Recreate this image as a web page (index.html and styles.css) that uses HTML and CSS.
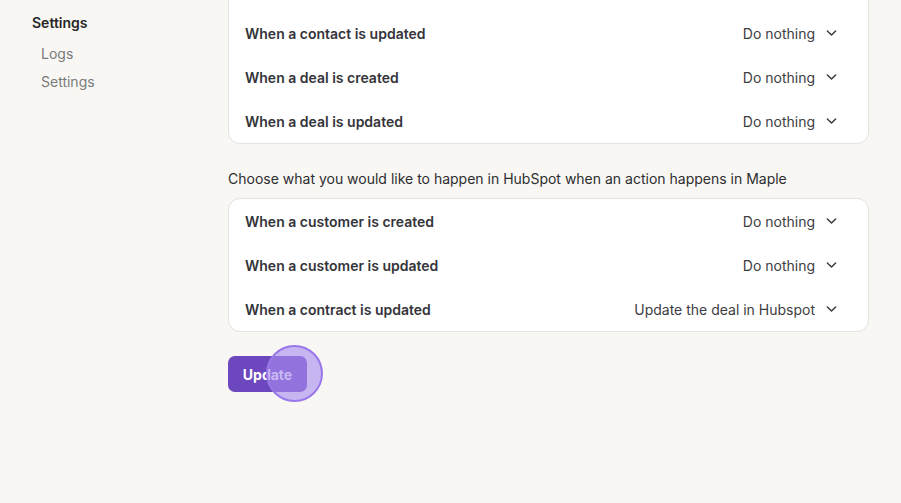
FILE: index.html
```html
<!DOCTYPE html>
<html>
<head>
<meta charset="utf-8">
<link rel="stylesheet" href="styles.css">
</head>
<body>
<div class="layout">
  <aside class="sidebar">
    <div class="side-title">Settings</div>
    <div class="side-link">Logs</div>
    <div class="side-link">Settings</div>
  </aside>
  <main class="main">
    <div class="card card-scrolled">
      <div class="row"><span class="label">When a contact is updated</span><span class="select">Do nothing<svg class="chev" viewBox="0 0 12 8"><path d="M1.5 1.8 6 6.2l4.5-4.4" fill="none" stroke="#3a3a3a" stroke-width="1.6" stroke-linecap="round" stroke-linejoin="round"/></svg></span></div>
      <div class="row"><span class="label">When a deal is created</span><span class="select">Do nothing<svg class="chev" viewBox="0 0 12 8"><path d="M1.5 1.8 6 6.2l4.5-4.4" fill="none" stroke="#3a3a3a" stroke-width="1.6" stroke-linecap="round" stroke-linejoin="round"/></svg></span></div>
      <div class="row"><span class="label">When a deal is updated</span><span class="select">Do nothing<svg class="chev" viewBox="0 0 12 8"><path d="M1.5 1.8 6 6.2l4.5-4.4" fill="none" stroke="#3a3a3a" stroke-width="1.6" stroke-linecap="round" stroke-linejoin="round"/></svg></span></div>
    </div>
    <p class="desc">Choose what you would like to happen in HubSpot when an action happens in Maple</p>
    <div class="card">
      <div class="row"><span class="label">When a customer is created</span><span class="select">Do nothing<svg class="chev" viewBox="0 0 12 8"><path d="M1.5 1.8 6 6.2l4.5-4.4" fill="none" stroke="#3a3a3a" stroke-width="1.6" stroke-linecap="round" stroke-linejoin="round"/></svg></span></div>
      <div class="row"><span class="label">When a customer is updated</span><span class="select">Do nothing<svg class="chev" viewBox="0 0 12 8"><path d="M1.5 1.8 6 6.2l4.5-4.4" fill="none" stroke="#3a3a3a" stroke-width="1.6" stroke-linecap="round" stroke-linejoin="round"/></svg></span></div>
      <div class="row"><span class="label">When a contract is updated</span><span class="select">Update the deal in Hubspot<svg class="chev" viewBox="0 0 12 8"><path d="M1.5 1.8 6 6.2l4.5-4.4" fill="none" stroke="#3a3a3a" stroke-width="1.6" stroke-linecap="round" stroke-linejoin="round"/></svg></span></div>
    </div>
    <div class="actions">
      <button class="btn">Update</button>
      <span class="click-dot"></span>
    </div>
  </main>
</div>
</body>
</html>
```
FILE: styles.css
```css
* { box-sizing: border-box; }
html, body { margin: 0; padding: 0; }
body {
  background: #f8f7f4;
  font-family: Inter, "Noto Sans", sans-serif;
  color: #2f2f2f;
  height: 503px;
  overflow: hidden;
}
.layout {
  display: flex;
}
.sidebar {
  width: 228px;
  flex: none;
  padding: 13px 0 0 32px;
}
.side-title {
  font-size: 14px;
  font-weight: 600;
  line-height: 20px;
  color: #262626;
  margin-bottom: 11px;
}
.side-link {
  font-size: 14px;
  line-height: 20px;
  color: #7a7a7a;
  padding-left: 9px;
  margin-bottom: 8px;
}
.main {
  width: 641px;
  flex: none;
  margin-top: -13px;
}
.card {
  background: #fff;
  border: 1px solid #e3e2df;
  border-radius: 12px;
}
.card-scrolled {
  padding-top: 23px;
}
.row {
  height: 44px;
  display: flex;
  align-items: center;
  justify-content: space-between;
  padding: 0 31px 0 16px;
}
.label {
  font-size: 14px;
  font-weight: 600;
  color: #34343a;
}
.select {
  display: flex;
  align-items: center;
  gap: 11px;
  font-size: 14px;
  color: #3d3d42;
}
.chev {
  width: 11px;
  height: 8px;
}
.desc {
  margin: 25px 0 9px;
  font-size: 14px;
  line-height: 20px;
  color: #2d2d30;
}
.actions {
  position: relative;
  margin-top: 24px;
}
.btn {
  width: 79px;
  height: 36px;
  border: none;
  border-radius: 7px;
  background: #6c47bd;
  color: #fff;
  font-family: Inter, "Noto Sans", sans-serif;
  font-size: 14px;
  font-weight: 700;
  padding: 0;
}
.click-dot {
  position: absolute;
  left: 38px;
  top: -11px;
  width: 57px;
  height: 57px;
  border-radius: 50%;
  background: rgba(170, 140, 240, 0.62);
  border: 2px solid #9a78ea;
}
```
